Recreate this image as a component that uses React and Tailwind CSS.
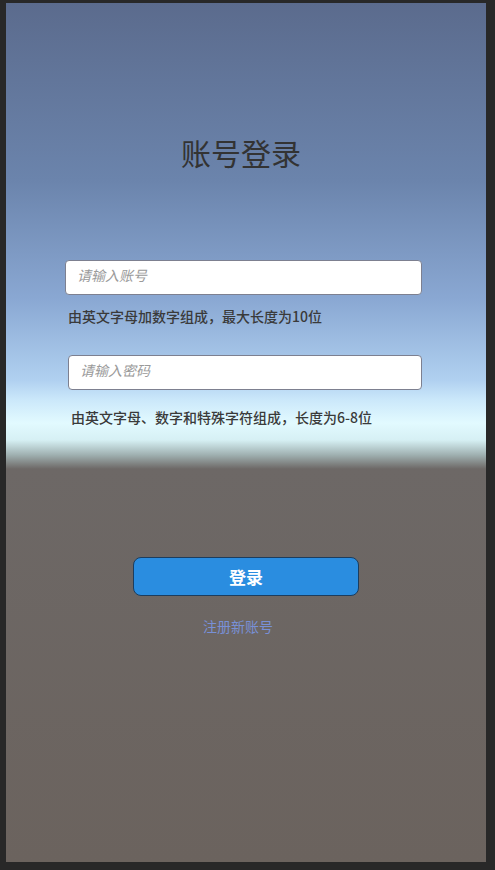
import React, { useState } from 'react';

const LoginPage = () => {
  const [account, setAccount] = useState('');
  const [password, setPassword] = useState('');

  return (
    <div className="w-[495px] h-[870px] bg-[#282828] pt-[3px] pl-[6px] font-['Noto_Sans_CJK_SC',sans-serif]">
      <div className="w-[480px] h-[859px] flex flex-col bg-[linear-gradient(to_bottom,#5b6b8d_0px,#6b84ac_177px,#8aa8d3_297px,#b0d0f0_377px,#cbe8fa_397px,#e2faff_420px,#d6f0f4_437px,#9fb0b0_452px,#6d6866_466px,#6b635e_859px)]">
        <h1 className="mt-[131px] pl-[175px] text-[30px] leading-[36px] font-normal text-[#333]">
          账号登录
        </h1>

        <input
          value={account}
          onChange={e => setAccount(e.target.value)}
          placeholder="请输入账号"
          className="mt-[90px] ml-[59px] w-[357px] h-[35px] bg-white border border-[#7d8090] rounded-[4px] pl-[11px] pb-[5px] text-[14px] italic text-[#333] placeholder:text-[#9a9a9a] outline-none"
        />
        <p className="mt-[12px] pl-[62px] text-[14px] leading-[18px] font-medium text-[#3a3a3a]">
          由英文字母加数字组成，最大长度为10位
        </p>

        <input
          type="password"
          value={password}
          onChange={e => setPassword(e.target.value)}
          placeholder="请输入密码"
          className="mt-[30px] ml-[62px] w-[354px] h-[35px] bg-white border border-[#7d8090] rounded-[4px] pl-[11px] pb-[5px] text-[14px] italic text-[#333] placeholder:text-[#9a9a9a] outline-none"
        />
        <p className="mt-[18px] pl-[65px] text-[14px] leading-[18px] font-medium text-[#3a3a3a]">
          由英文字母、数字和特殊字符组成，长度为6-8位
        </p>

        <button className="mt-[131px] ml-[127px] w-[226px] h-[39px] bg-[#2a8de0] border border-[#1c3d5e] rounded-[8px] text-white text-[17px] font-bold">
          登录
        </button>
        <a href="#" className="mt-[21px] pl-[197px] text-[14px] leading-[18px] text-[#7890d6]">
          注册新账号
        </a>
      </div>
    </div>
  );
};

export default function App() {
  return <LoginPage />;
}
